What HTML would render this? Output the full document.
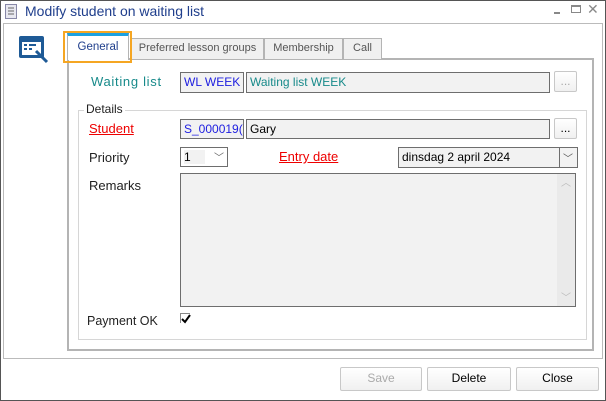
<!DOCTYPE html>
<html><head><style>
body{margin:0;width:606px;height:401px;position:relative;background:#fff;font-family:"Liberation Sans",sans-serif;font-size:12px;overflow:hidden}
.a{position:absolute;box-sizing:border-box}
.l{font-size:13px}
.box{border:1px solid #6e6e6e;background:#f2f2f2;padding:2px 3px;white-space:nowrap;overflow:hidden;line-height:14px}
.btn{border:1px solid #c8c8c8;border-radius:2px;background:linear-gradient(#fff,#f0f0f0);text-align:center;line-height:20px;color:#000}
.tab{border:1px solid #b4b4b4;border-bottom:none;background:#f0f0f0;color:#555;text-align:center;line-height:19px;font-size:11px}
</style></head><body>
<div class="a" style="left:0;top:0;width:606px;height:401px;border:1px solid #555"></div>
<svg class="a" style="left:5px;top:4px" width="12" height="15"><rect x="0.5" y="0.5" width="11" height="14" fill="#e8e8f0" stroke="#8888a8"/><path d="M3 4h6M3 7h6M3 10h6" stroke="#666"/></svg>
<div class="a" style="left:25px;top:3px;font-size:14px;color:#1f3e8c">Modify student on waiting list</div>
<div class="a" style="left:554px;top:12px;width:6px;height:2px;background:#888"></div>
<div class="a" style="left:571px;top:5px;width:10px;height:8px;border:1px solid #888;border-top-width:2px"></div>
<div class="a" style="left:587px;top:1px;color:#888;font-size:14px">✕</div>
<div class="a" style="left:3px;top:23px;width:600px;height:336px;border:1px solid #bbb"></div>
<svg class="a" style="left:18px;top:35px" width="32" height="30"><rect x="1" y="1" width="25" height="22" rx="2" fill="#1e5a96"/><rect x="4" y="7" width="19" height="13" fill="#fff"/><rect x="6" y="9" width="3" height="2" fill="#1e5a96"/><rect x="11" y="9" width="7" height="2" fill="#1e5a96"/><rect x="6" y="13" width="3" height="2" fill="#1e5a96"/><rect x="11" y="13" width="3" height="2" fill="#1e5a96"/><path d="M18 16l11 11" stroke="#1e5a96" stroke-width="3"/></svg>
<div class="a" style="left:67px;top:58px;width:527px;height:293px;border:2px solid #b4b4b4"></div>
<div class="a" style="left:78px;top:110px;width:509px;height:230px;border:1px solid #d6d6d6"></div>
<div class="a l" style="left:84px;top:102px;background:#fff;padding:0 2px;color:#222;font-size:12px">Details</div>
<div class="a tab" style="left:131px;top:38px;width:133px;height:21px">Preferred lesson groups</div>
<div class="a tab" style="left:264px;top:38px;width:79px;height:21px">Membership</div>
<div class="a tab" style="left:343px;top:38px;width:39px;height:21px">Call</div>
<div class="a" style="left:67px;top:33px;width:62px;height:27px;background:#fff;border:1px solid #b4b4b4;border-bottom:none;border-top:3px solid #1ba1e2;text-align:center;line-height:22px;color:#1f3e8c;font-size:11.5px">General</div>
<div class="a" style="left:63px;top:31px;width:69px;height:32px;border:2px solid #f5a623"></div>
<div class="a l" style="left:91px;top:74px;color:#178a8a;letter-spacing:0.7px">Waiting list</div>
<div class="a box" style="left:180px;top:72px;width:64px;height:21px;color:#2020e0">WL WEEK</div>
<div class="a box" style="left:246px;top:72px;width:304px;height:21px;color:#178a8a">Waiting list WEEK</div>
<div class="a btn" style="left:554px;top:71px;width:23px;height:21px;color:#aaa;line-height:18px">...</div>
<div class="a l" style="left:89px;top:121px;color:#e00;text-decoration:underline">Student</div>
<div class="a box" style="left:180px;top:119px;width:64px;height:20px;color:#2020e0">S_000019(</div>
<div class="a box" style="left:246px;top:119px;width:304px;height:20px">Gary</div>
<div class="a btn" style="left:554px;top:118px;width:23px;height:21px;line-height:18px">...</div>
<div class="a l" style="left:89px;top:150px;color:#222">Priority</div>
<div class="a box" style="left:180px;top:147px;width:48px;height:20px;background:#fff"><span style="background:#f2f2f2;padding-right:14px">1</span></div>
<div class="a" style="left:214px;top:149px;color:#666;font-size:10px">﹀</div>
<div class="a l" style="left:279px;top:149px;color:#e00;text-decoration:underline">Entry date</div>
<div class="a box" style="left:398px;top:147px;width:180px;height:21px;color:#000">dinsdag 2 april 2024</div>
<div class="a" style="left:559px;top:148px;width:1px;height:19px;background:#6e6e6e"></div>
<div class="a" style="left:563px;top:150px;color:#555;font-size:10px">﹀</div>
<div class="a l" style="left:89px;top:178px;color:#222">Remarks</div>
<div class="a box" style="left:180px;top:173px;width:396px;height:134px"></div>
<div class="a" style="left:557px;top:174px;width:18px;height:132px;background:#eaeaea;color:#bbb;font-size:10px;text-align:center">︿<div style="position:absolute;bottom:2px;width:18px">﹀</div></div>
<div class="a" style="left:87px;top:314px;color:#222;font-size:12.5px">Payment OK</div>
<div class="a" style="left:180px;top:313px;width:10px;height:10px;border-left:1px solid #888;border-top:1px solid #888"></div>
<svg class="a" style="left:181px;top:314px" width="10" height="10"><path d="M1 5l3 3 5-7" stroke="#000" stroke-width="2" fill="none"/></svg>
<div class="a btn" style="left:340px;top:367px;width:82px;height:24px;color:#aaa">Save</div>
<div class="a btn" style="left:427px;top:367px;width:84px;height:24px">Delete</div>
<div class="a btn" style="left:516px;top:367px;width:83px;height:24px">Close</div>
</body></html>
